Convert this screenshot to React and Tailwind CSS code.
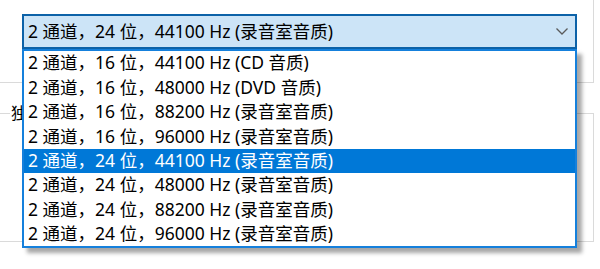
import { useState } from "react";

const options = [
  "2 通道，16 位，44100 Hz (CD 音质)",
  "2 通道，16 位，48000 Hz (DVD 音质)",
  "2 通道，16 位，88200 Hz (录音室音质)",
  "2 通道，16 位，96000 Hz (录音室音质)",
  "2 通道，24 位，44100 Hz (录音室音质)",
  "2 通道，24 位，48000 Hz (录音室音质)",
  "2 通道，24 位，88200 Hz (录音室音质)",
  "2 通道，24 位，96000 Hz (录音室音质)",
];

const font = "font-['Noto_Sans','Noto_Sans_CJK_SC',sans-serif]";

export default function App() {
  const [selected, setSelected] = useState(4);

  return (
    <div className={`relative h-[269px] w-[600px] overflow-hidden bg-white text-[17.5px] text-black ${font}`}>
      {/* default format box */}
      <div className="-ml-[10px] h-[83px] w-[604px] border-r border-b border-[#dadada] pt-[14px] pl-[32px]">
        <div className="relative w-[555px]">
          <button className="flex h-[35px] w-full items-center justify-between border-2 border-[#0c62a8] bg-[#cce4f7] pr-[6px] pl-[4px] text-left leading-none">
            <span>{options[selected]}</span>
            <svg width="12" height="7" viewBox="0 0 12 7" className="mr-[1px]">
              <polyline points="0.5,0.5 6,6 11.5,0.5" fill="none" stroke="#5a5a5a" strokeWidth="1.3" />
            </svg>
          </button>

          {/* open list */}
          <ul className="absolute top-[35px] left-0 z-10 w-full border-2 border-[#1580dc] bg-white shadow-[5px_5px_4px_rgba(0,0,0,0.35)]">
            {options.map((opt, i) => (
              <li
                key={opt}
                onClick={() => setSelected(i)}
                className={`flex h-[24.4px] items-center pl-[4px] leading-none ${
                  i === selected ? "bg-[#0078d7] text-white" : ""
                }`}
              >
                {opt}
              </li>
            ))}
          </ul>
        </div>
      </div>

      {/* exclusive mode group */}
      <fieldset className="-ml-[10px] mt-[22px] h-[137px] w-[604px] border-r border-b border-t border-[#dadada] px-0">
        <legend className="ml-[20px] px-[1px] text-[16px] leading-none">独占模式</legend>
      </fieldset>
    </div>
  );
}
